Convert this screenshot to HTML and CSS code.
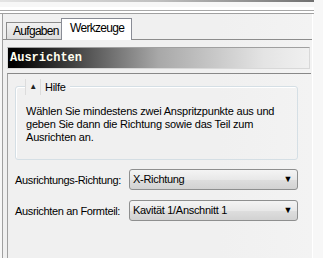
FILE: index.html
```html
<!DOCTYPE html>
<html lang="de">
<head>
	<meta charset="UTF-8">
	<title>Ausrichten</title>
	<link rel="stylesheet" href="styles.css">
</head>
<body>
	<div class="topline"></div>
	<div class="toplines"></div>
	<div class="frame">
		<ul class="tabs">
			<li>Aufgaben</li>
			<li class="active">Werkzeuge</li>
		</ul>
		<div class="header">Ausrichten</div>
		<div class="panel">
			<div class="group">
				<div class="legend">
					<span class="toggle">&#9650;</span>
					<span class="legend_text">Hilfe</span>
				</div>
				<p class="help">Wählen Sie mindestens zwei Anspritzpunkte aus und geben Sie dann die Richtung sowie das Teil zum Ausrichten an.</p>
			</div>
			<div class="row">
				<label>Ausrichtungs-Richtung:</label>
				<div class="combo">X-Richtung<span class="arrow">&#9660;</span></div>
			</div>
			<div class="row">
				<label>Ausrichten an Formteil:</label>
				<div class="combo">Kavität 1/Anschnitt 1<span class="arrow">&#9660;</span></div>
			</div>
		</div>
	</div>
</body>
</html>
```

FILE: styles.css
```css
*{
	margin:0;
	padding:0;
	list-style:none;
	box-sizing:border-box;
}
body{
	width:323px;
	height:258px;
	overflow:hidden;
	background:#f7f7f7;
	font-family:"Liberation Sans",Arial,sans-serif;
	font-size:11px;
	letter-spacing:-0.3px;
	color:#000;
}
.topline{
	height:2px;
	width:314px;
	background:linear-gradient(to right,#e4e4e4,#c0c0c0 50%,#707070);
}
.toplines{
	height:7px;
	width:314px;
	margin-top:5px;
	background:linear-gradient(#fff 0,#fff 3px,#a8a8a8 3px,#a8a8a8 4px,#fff 4px,#fff 6px,#a0a0a0 6px);
}
.frame{
	margin-left:2px;
	width:311px;
	height:244px;
	border-left:1px solid #a0a0a0;
	border-right:1px solid #fff;
	background:linear-gradient(to right,#f0f0f0 70%,#f3f3f3);
}
.tabs{
	display:flex;
	align-items:flex-end;
	height:26px;
	padding-left:3px;
	border-bottom:1px solid #8c8c8c;
	font-size:12px;
	letter-spacing:-0.7px;
}
.tabs li{
	height:17px;
	padding:1px 0 0 6px;
	width:56px;
	border:1px solid #8c8c8c;
	border-bottom:none;
	background:linear-gradient(#f2f2f2,#dcdcdc);
}
.tabs li.active{
	height:22px;
	width:71px;
	margin-bottom:-1px;
	margin-left:-1px;
	padding:2px 0 0 8px;
	background:#fff;
	border-color:#898c95;
}
.header{
	margin:7px 2px 0 4px;
	height:22px;
	padding:3px 0 0 2px;
	border:1px solid #d8d8d8;
	border-top-color:#a0a0a0;
	background:linear-gradient(to right,#000 2%,#3c3c3c 20%,#a8a8a8 50%,#e4e4e4 85%,#f0f0f0);
	color:#fffef0;
	font-family:"Liberation Mono","Courier New",monospace;
	font-weight:bold;
	font-size:12px;
	letter-spacing:0;
}
.panel{
	margin:4px 0 0 4px;
	height:190px;
	width:304px;
	border-left:1px solid #a0a0a0;
	border-top:1px solid #888;
	padding:12px 13px 0 7px;
}
.group{
	border:1px solid #d5dfe5;
	border-radius:3px;
	height:74px;
	padding:0 0 0 9px;
	box-shadow:inset 1px 1px 0 #fff;
}
.legend{
	display:flex;
	align-items:center;
	margin-top:-8px;
	height:16px;
}
.toggle{
	width:16px;
	height:16px;
	border-left:1px solid #dcdcdc;
	border-right:1px solid #dcdcdc;
	background:#f0f0f0;
	font-size:8px;
	color:#222;
	text-align:center;
	line-height:15px;
}
.legend_text{
	background:#f0f0f0;
	padding:0 4px 0 4px;
}
.help{
	margin:10px 0 0 1px;
	line-height:13px;
	width:262px;
	letter-spacing:-0.2px;
}
.row{
	display:flex;
	align-items:center;
	height:21px;
	margin-top:9px;
}
.row + .row{
	margin-top:10px;
}
.row label{
	flex-shrink:0;
	white-space:nowrap;
	width:114px;
	letter-spacing:-0.35px;
}
.combo{
	position:relative;
	width:169px;
	height:21px;
	border:1px solid #8e8f8f;
	border-radius:3px;
	background:linear-gradient(#f4f4f4,#e8e8e8 50%,#dedede 51%,#d2d2d2);
	padding:3px 0 0 3px;
}
.arrow{
	position:absolute;
	right:5px;
	top:4px;
	font-size:9px;
}
```
